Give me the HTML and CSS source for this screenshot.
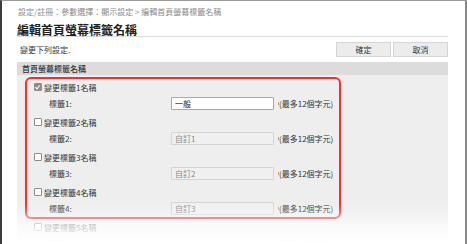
FILE: index.html
```html
<!doctype html>
<html lang="zh-Hant">
  <head>
    <meta charset="UTF-8" />
    <meta name="viewport" content="width=device-width, initial-scale=1.0" />
    <title>編輯首頁螢幕標籤名稱</title>
    <link rel="stylesheet" href="styles.css">
  </head>
  <body>
    <div class="window">
      <div class="breadcrumb">設定/註冊：參數選擇：顯示設定 &gt; 編輯首頁螢幕標籤名稱</div>
      <h1 class="title">編輯首頁螢幕標籤名稱</h1>
      <div class="toolbar">
        <span class="hint">變更下列設定.</span>
        <div class="btn-group">
          <button class="btn">確定</button>
          <button class="btn">取消</button>
        </div>
      </div>
      <div class="section-head">首頁螢幕標籤名稱</div>
      <div class="panel">
        <div class="highlight">
          <div class="group">
            <label class="check-row"><span class="box checked"></span>變更標籤1名稱</label>
            <div class="field-row">
              <span class="field-label">標籤1:</span>
              <input class="field" type="text" value="一般" />
              <span class="note">(最多12個字元)</span>
            </div>
          </div>
          <div class="group">
            <label class="check-row"><span class="box"></span>變更標籤2名稱</label>
            <div class="field-row">
              <span class="field-label">標籤2:</span>
              <input class="field" type="text" value="自訂1" disabled />
              <span class="note">(最多12個字元)</span>
            </div>
          </div>
          <div class="group">
            <label class="check-row"><span class="box"></span>變更標籤3名稱</label>
            <div class="field-row">
              <span class="field-label">標籤3:</span>
              <input class="field" type="text" value="自訂2" disabled />
              <span class="note">(最多12個字元)</span>
            </div>
          </div>
          <div class="group">
            <label class="check-row"><span class="box"></span>變更標籤4名稱</label>
            <div class="field-row">
              <span class="field-label">標籤4:</span>
              <input class="field" type="text" value="自訂3" disabled />
              <span class="note">(最多12個字元)</span>
            </div>
          </div>
        </div>
        <div class="group outside">
          <label class="check-row"><span class="box"></span>變更標籤5名稱</label>
          <div class="field-row">
            <span class="field-label">標籤5:</span>
            <input class="field" type="text" value="自訂4" disabled />
            <span class="note">(最多12個字元)</span>
          </div>
        </div>
      </div>
      <div class="fade"></div>
    </div>
  </body>
</html>
```

FILE: styles.css
```css
body {
  margin: 0;
  font-family: "Noto Sans CJK TC", "Noto Sans", sans-serif;
  color: #333333;
  background-color: #ffffff;
}
.window {
  position: relative;
  box-sizing: border-box;
  width: 467px;
  height: 244px;
  overflow: hidden;
  border-top: 1px solid #9a9a9a;
  border-left: 2px solid #3c3c3c;
  border-right: 2px solid #8a8a8a;
  padding: 0 17px 0 15px;
  background-color: #ffffff;
}
.breadcrumb {
  margin-top: 5px;
  height: 12px;
  line-height: 12px;
  font-size: 8px;
  color: #8a8a8a;
  padding-left: 1px;
  white-space: nowrap;
}
.title {
  margin: 5px 0 0;
  height: 13px;
  line-height: 13px;
  font-size: 12px;
  font-weight: bold;
  color: #222222;
  border-bottom: 1px solid #dcdcdc;
}
.toolbar {
  display: flex;
  justify-content: space-between;
  align-items: center;
  margin-top: 5px;
}
.hint {
  font-size: 8px;
  padding-left: 3px;
  color: #333333;
}
.btn-group {
  display: flex;
  gap: 2px;
}
.btn {
  box-sizing: border-box;
  width: 55px;
  height: 15px;
  padding: 0;
  font-family: inherit;
  font-size: 8px;
  line-height: 13px;
  color: #333333;
  background-color: #ececec;
  border: 1px solid #d6d6d6;
}
.section-head {
  margin-top: 5px;
  height: 13px;
  line-height: 13px;
  padding-left: 5px;
  font-size: 8px;
  font-weight: 500;
  color: #333333;
  background-color: #dcdcdc;
}
.panel {
  background-color: #eeeeee;
  padding: 2px 0 10px 8px;
}
.highlight {
  box-sizing: border-box;
  width: 316px;
  border: 2px solid #ff2a2a;
  border-radius: 6px;
  padding: 0 0 1px 7px;
}
.group {
  margin-bottom: 3px;
}
.group:last-child {
  margin-bottom: 0;
}
.outside {
  margin-left: 9px;
  margin-top: 0;
}
.check-row {
  display: flex;
  align-items: center;
  height: 16px;
  font-size: 8px;
  color: #333333;
}
.box {
  box-sizing: border-box;
  width: 8px;
  height: 8px;
  margin-right: 2px;
  border: 1px solid #8c8c8c;
  border-radius: 1px;
  background-color: #ffffff;
  position: relative;
}
.box.checked {
  background-color: #8c8c8c;
}
.box.checked::after {
  content: "";
  position: absolute;
  left: 1px;
  top: 0;
  width: 2px;
  height: 4px;
  border-right: 1px solid #ffffff;
  border-bottom: 1px solid #ffffff;
  transform: rotate(40deg);
}
.field-row {
  display: flex;
  align-items: center;
  height: 16px;
}
.field-label {
  width: 122px;
  padding-left: 15px;
  font-size: 8px;
  color: #333333;
}
.field {
  box-sizing: border-box;
  width: 103px;
  height: 13px;
  padding: 0 3px;
  font-family: inherit;
  font-size: 8px;
  color: #222222;
  background-color: #ffffff;
  border: 1px solid #a8a8a8;
  border-radius: 1px;
}
.field:disabled {
  color: #8a8a8a;
  background-color: #f0f0f0;
  border-color: #d4d4d4;
}
.note {
  position: relative;
  margin-left: 4px;
  padding-left: 1px;
  font-size: 8px;
  color: #333333;
  white-space: nowrap;
}
.note::before {
  content: "";
  position: absolute;
  left: 0;
  top: 50%;
  width: 1px;
  height: 3px;
  margin-top: -1px;
  background-color: #e0a040;
}
.fade {
  position: absolute;
  left: 0;
  right: 0;
  bottom: 0;
  height: 40px;
  background: linear-gradient(rgba(255, 255, 255, 0), rgba(255, 255, 255, 0.75) 60%, #ffffff 95%);
}
```
